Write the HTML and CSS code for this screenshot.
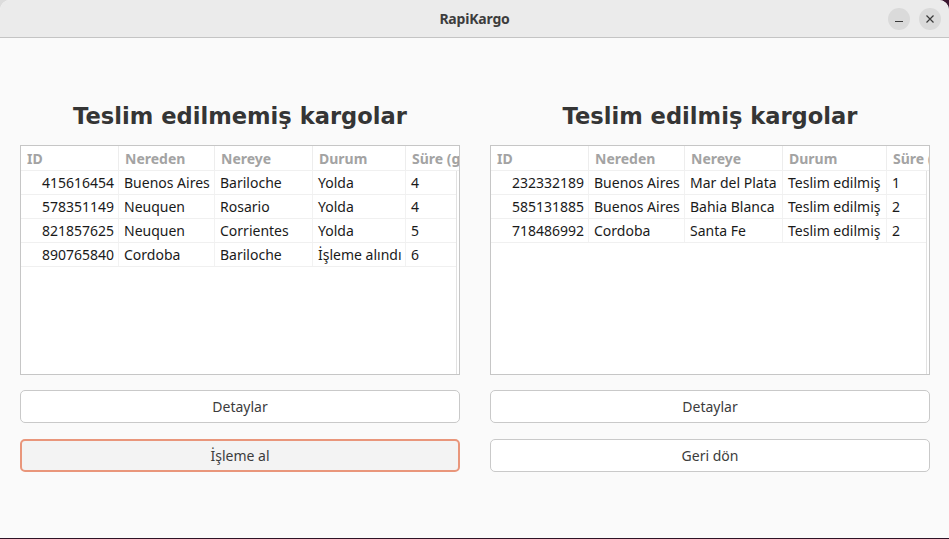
FILE: index.html
```html
<!DOCTYPE html>
<html lang="tr">
<head>
<meta charset="utf-8">
<title>RapiKargo</title>
<link rel="stylesheet" href="styles.css">
</head>
<body>
<div class="window">
  <header class="titlebar">
    <span class="title">RapiKargo</span>
    <div class="controls">
      <button class="ctl" aria-label="minimize"><svg width="10" height="10" viewBox="0 0 10 10"><path d="M1 7.5h8" stroke="#3a3a3a" stroke-width="1.2"/></svg></button>
      <button class="ctl" aria-label="close"><svg width="10" height="10" viewBox="0 0 10 10"><path d="M1.5 1.5l7 7M8.5 1.5l-7 7" stroke="#3a3a3a" stroke-width="1.2"/></svg></button>
    </div>
  </header>
  <main class="content">
    <section class="panel">
      <h1 class="heading">Teslim edilmemiş kargolar</h1>
      <div class="table">
        <div class="row head left-cols">
          <div class="cell">ID</div><div class="cell">Nereden</div><div class="cell">Nereye</div><div class="cell">Durum</div><div class="cell">Süre (gün)</div>
        </div>
        <div class="body">
          <div class="row left-cols"><div class="cell num">415616454</div><div class="cell">Buenos Aires</div><div class="cell">Bariloche</div><div class="cell">Yolda</div><div class="cell">4</div></div>
          <div class="row left-cols"><div class="cell num">578351149</div><div class="cell">Neuquen</div><div class="cell">Rosario</div><div class="cell">Yolda</div><div class="cell">4</div></div>
          <div class="row left-cols"><div class="cell num">821857625</div><div class="cell">Neuquen</div><div class="cell">Corrientes</div><div class="cell">Yolda</div><div class="cell">5</div></div>
          <div class="row left-cols"><div class="cell num">890765840</div><div class="cell">Cordoba</div><div class="cell">Bariloche</div><div class="cell">İşleme alındı</div><div class="cell">6</div></div>
        </div>
      </div>
      <button class="btn">Detaylar</button>
      <button class="btn focus">İşleme al</button>
    </section>
    <section class="panel">
      <h1 class="heading">Teslim edilmiş kargolar</h1>
      <div class="table">
        <div class="row head right-cols">
          <div class="cell">ID</div><div class="cell">Nereden</div><div class="cell">Nereye</div><div class="cell">Durum</div><div class="cell">Süre (gün)</div>
        </div>
        <div class="body">
          <div class="row right-cols"><div class="cell num">232332189</div><div class="cell">Buenos Aires</div><div class="cell">Mar del Plata</div><div class="cell">Teslim edilmiş</div><div class="cell">1</div></div>
          <div class="row right-cols"><div class="cell num">585131885</div><div class="cell">Buenos Aires</div><div class="cell">Bahia Blanca</div><div class="cell">Teslim edilmiş</div><div class="cell">2</div></div>
          <div class="row right-cols"><div class="cell num">718486992</div><div class="cell">Cordoba</div><div class="cell">Santa Fe</div><div class="cell">Teslim edilmiş</div><div class="cell">2</div></div>
        </div>
      </div>
      <button class="btn">Detaylar</button>
      <button class="btn">Geri dön</button>
    </section>
  </main>
</div>
</body>
</html>
```
FILE: styles.css
```css
* { box-sizing: border-box; }
html, body { margin: 0; padding: 0; }
body {
  width: 949px;
  height: 539px;
  overflow: hidden;
  background: linear-gradient(to right, #dcdcdc 0, #dcdcdc 890px, #3b1730 890px);
  font-family: "Noto Sans", "DejaVu Sans", sans-serif;
}
.window {
  background: #fafafa;
  border-radius: 10px 10px 0 0;
  overflow: hidden;
  display: flex;
  flex-direction: column;
  border-bottom: 1px solid #2d1326;
  height: 539px;
}
.titlebar {
  height: 38px;
  flex: none;
  background: #ebebeb;
  border-bottom: 1px solid #c4c4c4;
  display: flex;
  align-items: center;
  justify-content: center;
  position: relative;
}
.title {
  font-size: 14px;
  font-weight: 700;
  color: #3d3d3d;
  letter-spacing: -0.2px;
}
.controls {
  position: absolute;
  right: 8px;
  top: 8px;
  display: flex;
  gap: 9px;
}
.ctl {
  width: 22px;
  height: 22px;
  border-radius: 50%;
  border: none;
  padding: 0;
  background: #dadada;
  display: flex;
  align-items: center;
  justify-content: center;
}
.content {
  flex: 1;
  display: grid;
  grid-template-columns: 440px 440px;
  column-gap: 30px;
  padding: 63px 19px 0 20px;
  align-items: start;
}
.panel {
  display: flex;
  flex-direction: column;
}
.heading {
  margin: 0;
  height: 30px;
  line-height: 30px;
  text-align: center;
  font-family: "DejaVu Sans", sans-serif;
  font-size: 22.6px;
  font-weight: 700;
  color: #353535;
}
.table {
  margin-top: 14px;
  height: 230px;
  border: 1px solid #c6c6c6;
  background: #ffffff;
  overflow: hidden;
  font-size: 14px;
  color: #1a1a1a;
}
.row {
  display: grid;
  height: 24px;
  align-items: center;
  border-bottom: 1px solid #f0f0f0;
  white-space: nowrap;
}
.left-cols { grid-template-columns: 98px 96px 98px 93px 60px; }
.right-cols { grid-template-columns: 98px 96px 98px 104px 60px; }
.cell {
  height: 100%;
  display: flex;
  align-items: center;
  padding-left: 5px;
  overflow: hidden;
  border-right: 1px solid #f2f2f2;
}
.cell.num {
  justify-content: flex-end;
  padding-right: 4px;
}
.head {
  height: 25px;
  border-bottom: 1px solid #f0f0f0;
}
.head .cell {
  color: #a3a3a3;
  font-weight: 700;
  padding-left: 6px;
  border-right: 1px solid #ededed;
}
.body {
  height: 203px;
  margin-right: 2px;
  border-right: 1px solid #e2e2e2;
}
.btn {
  margin-top: 15px;
  height: 33px;
  border: 1px solid #c9c9c9;
  border-radius: 5px;
  background: #ffffff;
  font-family: "Noto Sans", "DejaVu Sans", sans-serif;
  font-size: 14px;
  color: #3c3c3c;
  padding: 0;
}
.btn + .btn { margin-top: 16px; }
.btn.focus {
  border: 2px solid #e9967b;
  background: #f3f3f3;
}
```
